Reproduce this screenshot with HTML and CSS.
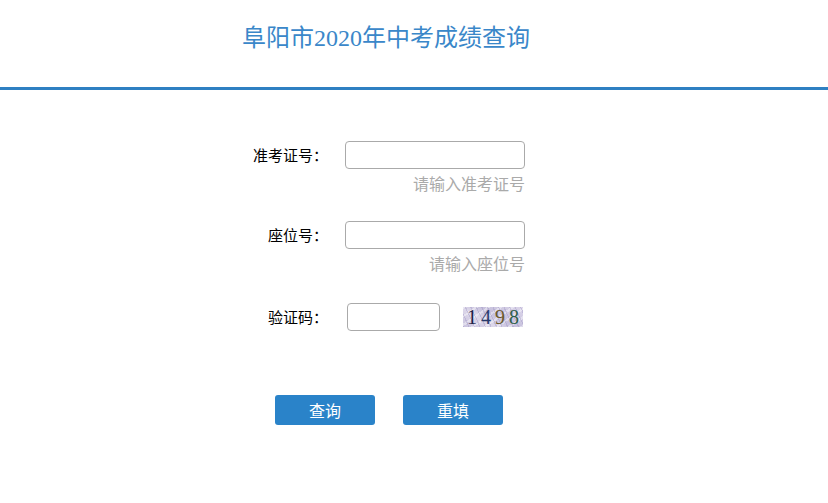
FILE: index.html
```html
<!DOCTYPE html>
<html lang="zh-CN">
<head>
    <meta charset="UTF-8">
    <title>阜阳市2020年中考成绩查询</title>
    <link rel="stylesheet" href="styles.css">
</head>
<body>

    <div class="header">
        <h1 class="title">阜阳市2020年中考成绩查询</h1>
    </div>

    <form class="query-form" onsubmit="return false;">
        <div class="row">
            <label class="label" for="zkzh">准考证号：</label>
            <div class="field">
                <input class="input" type="text" id="zkzh">
                <div class="hint">请输入准考证号</div>
            </div>
        </div>

        <div class="row">
            <label class="label" for="zwh">座位号：</label>
            <div class="field">
                <input class="input" type="text" id="zwh">
                <div class="hint">请输入座位号</div>
            </div>
        </div>

        <div class="row row-code">
            <label class="label" for="yzm">验证码：</label>
            <div class="field code-field">
                <input class="input input-code" type="text" id="yzm">
                <div class="captcha"><span class="d1">1</span><span class="d2">4</span><span class="d3">9</span><span class="d4">8</span></div>
            </div>
        </div>

        <div class="buttons">
            <button class="btn" type="submit">查询</button>
            <button class="btn" type="reset">重填</button>
        </div>
    </form>

</body>
</html>
```

FILE: styles.css
```css
body {
    margin: 0;
    background-color: #fff;
    font-family: "Liberation Sans", "Noto Sans CJK SC", sans-serif;
    color: #000;
}

.header {
    height: 87px;
    border-bottom: 3px solid #2f80c2;
}

.title {
    margin: 0;
    padding: 22px 0 0 242px;
    font-family: "Liberation Serif", "Noto Sans CJK SC", serif;
    font-size: 24px;
    font-weight: normal;
    line-height: 32px;
    color: #3a87c9;
}

.query-form {
    width: 290px;
    margin: 51px 0 0 235px;
}

.row {
    display: flex;
    align-items: flex-start;
}

.row + .row {
    margin-top: 24px;
}

.row.row-code {
    margin-top: 26px;
}

.label {
    width: 93px;
    margin-right: 17px;
    font-size: 15px;
    line-height: 28px;
    text-align: right;
    padding-top: 1px;
}

.field {
    width: 180px;
}

.input {
    display: block;
    box-sizing: border-box;
    width: 180px;
    height: 28px;
    margin: 0;
    padding: 0 6px;
    border: 1px solid #aaa;
    border-radius: 4px;
    font-size: 14px;
    outline: none;
}

.hint {
    margin-top: 4px;
    font-size: 16px;
    line-height: 24px;
    color: #aaa;
    text-align: right;
}

.code-field {
    display: flex;
    align-items: center;
}

.input-code {
    width: 93px;
    margin-left: 2px;
}

.captcha {
    width: 60px;
    height: 20px;
    margin-left: 23px;
    background:
        repeating-linear-gradient(65deg, rgba(150,140,190,0.35) 0 1px, transparent 1px 5px),
        repeating-linear-gradient(-35deg, rgba(255,255,255,0.4) 0 2px, transparent 2px 7px),
        linear-gradient(30deg, #c9c3de 0%, #ddd8ea 35%, #c6c0dc 55%, #dcd6ea 100%);
    font-family: "Liberation Serif", serif;
    font-size: 20px;
    line-height: 20px;
    letter-spacing: 4px;
    text-indent: 4px;
    text-align: left;
    overflow: hidden;
}

.d1 { color: #1d2246; }
.d2 { color: #283a6c; }
.d3 { color: #6b5a2a; }
.d4 { color: #2f5f4a; }

.buttons {
    display: flex;
    margin: 63px 0 0 40px;
    gap: 28px;
}

.btn {
    width: 100px;
    height: 30px;
    padding: 0;
    border: none;
    border-radius: 3px;
    background-color: #2a83c9;
    color: #fff;
    font-family: "Liberation Sans", "Noto Sans CJK SC", sans-serif;
    font-size: 16px;
    cursor: pointer;
}
```
